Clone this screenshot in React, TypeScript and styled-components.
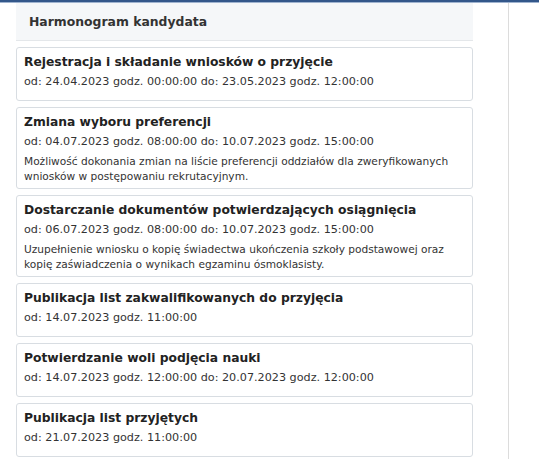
import React from "react";
import styled, { createGlobalStyle } from "styled-components";

const Global = createGlobalStyle`
  html, body { margin: 0; padding: 0; background: #fff; }
  body { font-family: "DejaVu Sans", Verdana, sans-serif; color: #333; }
`;

const TopBar = styled.div`
  height: 2px;
  background: #33578a;
  border-bottom: 1px solid #9fb3cf;
`;

const Layout = styled.div`
  display: flex;
`;

const Main = styled.div`
  width: 509px;
  box-sizing: border-box;
  padding-left: 16px;
  border-right: 1px solid #dcdcdc;
  min-height: 456px;
`;

const Column = styled.div`
  width: 457px;
  display: flex;
  flex-direction: column;
`;

const Header = styled.div`
  height: 37px;
  background: #f5f7f9;
  border-bottom: 1px solid #e4e7ea;
  display: flex;
  align-items: center;
  padding-left: 13px;
  font-size: 12.4px;
  font-weight: bold;
  color: #333;
  margin-bottom: 6px;
`;

const List = styled.div`
  display: flex;
  flex-direction: column;
  gap: 6px;
`;

const Card = styled.div`
  border: 1px solid #d8dde2;
  border-radius: 3px;
  padding: 4px 7px 8px;
`;

const Title = styled.div`
  font-size: 12.3px;
  font-weight: bold;
  line-height: 20px;
  color: #222;
  white-space: nowrap;
`;

const DateLine = styled.div`
  font-size: 11.2px;
  line-height: 20px;
  color: #333;
  white-space: nowrap;
`;

const Desc = styled.div`
  font-size: 10.6px;
  line-height: 15px;
  color: #333;
  margin: 2px 0 -4px;
  white-space: nowrap;
`;

const items = [
  {
    title: "Rejestracja i składanie wniosków o przyjęcie",
    date: "od: 24.04.2023 godz. 00:00:00 do: 23.05.2023 godz. 12:00:00",
  },
  {
    title: "Zmiana wyboru preferencji",
    date: "od: 04.07.2023 godz. 08:00:00 do: 10.07.2023 godz. 15:00:00",
    desc: [
      "Możliwość dokonania zmian na liście preferencji oddziałów dla zweryfikowanych",
      "wniosków w postępowaniu rekrutacyjnym.",
    ],
  },
  {
    title: "Dostarczanie dokumentów potwierdzających osiągnięcia",
    date: "od: 06.07.2023 godz. 08:00:00 do: 10.07.2023 godz. 15:00:00",
    desc: [
      "Uzupełnienie wniosku o kopię świadectwa ukończenia szkoły podstawowej oraz",
      "kopię zaświadczenia o wynikach egzaminu ósmoklasisty.",
    ],
  },
  {
    title: "Publikacja list zakwalifikowanych do przyjęcia",
    date: "od: 14.07.2023 godz. 11:00:00",
  },
  {
    title: "Potwierdzanie woli podjęcia nauki",
    date: "od: 14.07.2023 godz. 12:00:00 do: 20.07.2023 godz. 12:00:00",
  },
  {
    title: "Publikacja list przyjętych",
    date: "od: 21.07.2023 godz. 11:00:00",
  },
];

export default function App() {
  return (
    <>
      <Global />
      <TopBar />
      <Layout>
        <Main>
          <Column>
            <Header>Harmonogram kandydata</Header>
            <List>
              {items.map((it) => (
                <Card key={it.title}>
                  <Title>{it.title}</Title>
                  <DateLine>{it.date}</DateLine>
                  {it.desc && (
                    <Desc>
                      {it.desc.map((l) => (
                        <div key={l}>{l}</div>
                      ))}
                    </Desc>
                  )}
                </Card>
              ))}
            </List>
          </Column>
        </Main>
      </Layout>
    </>
  );
}
